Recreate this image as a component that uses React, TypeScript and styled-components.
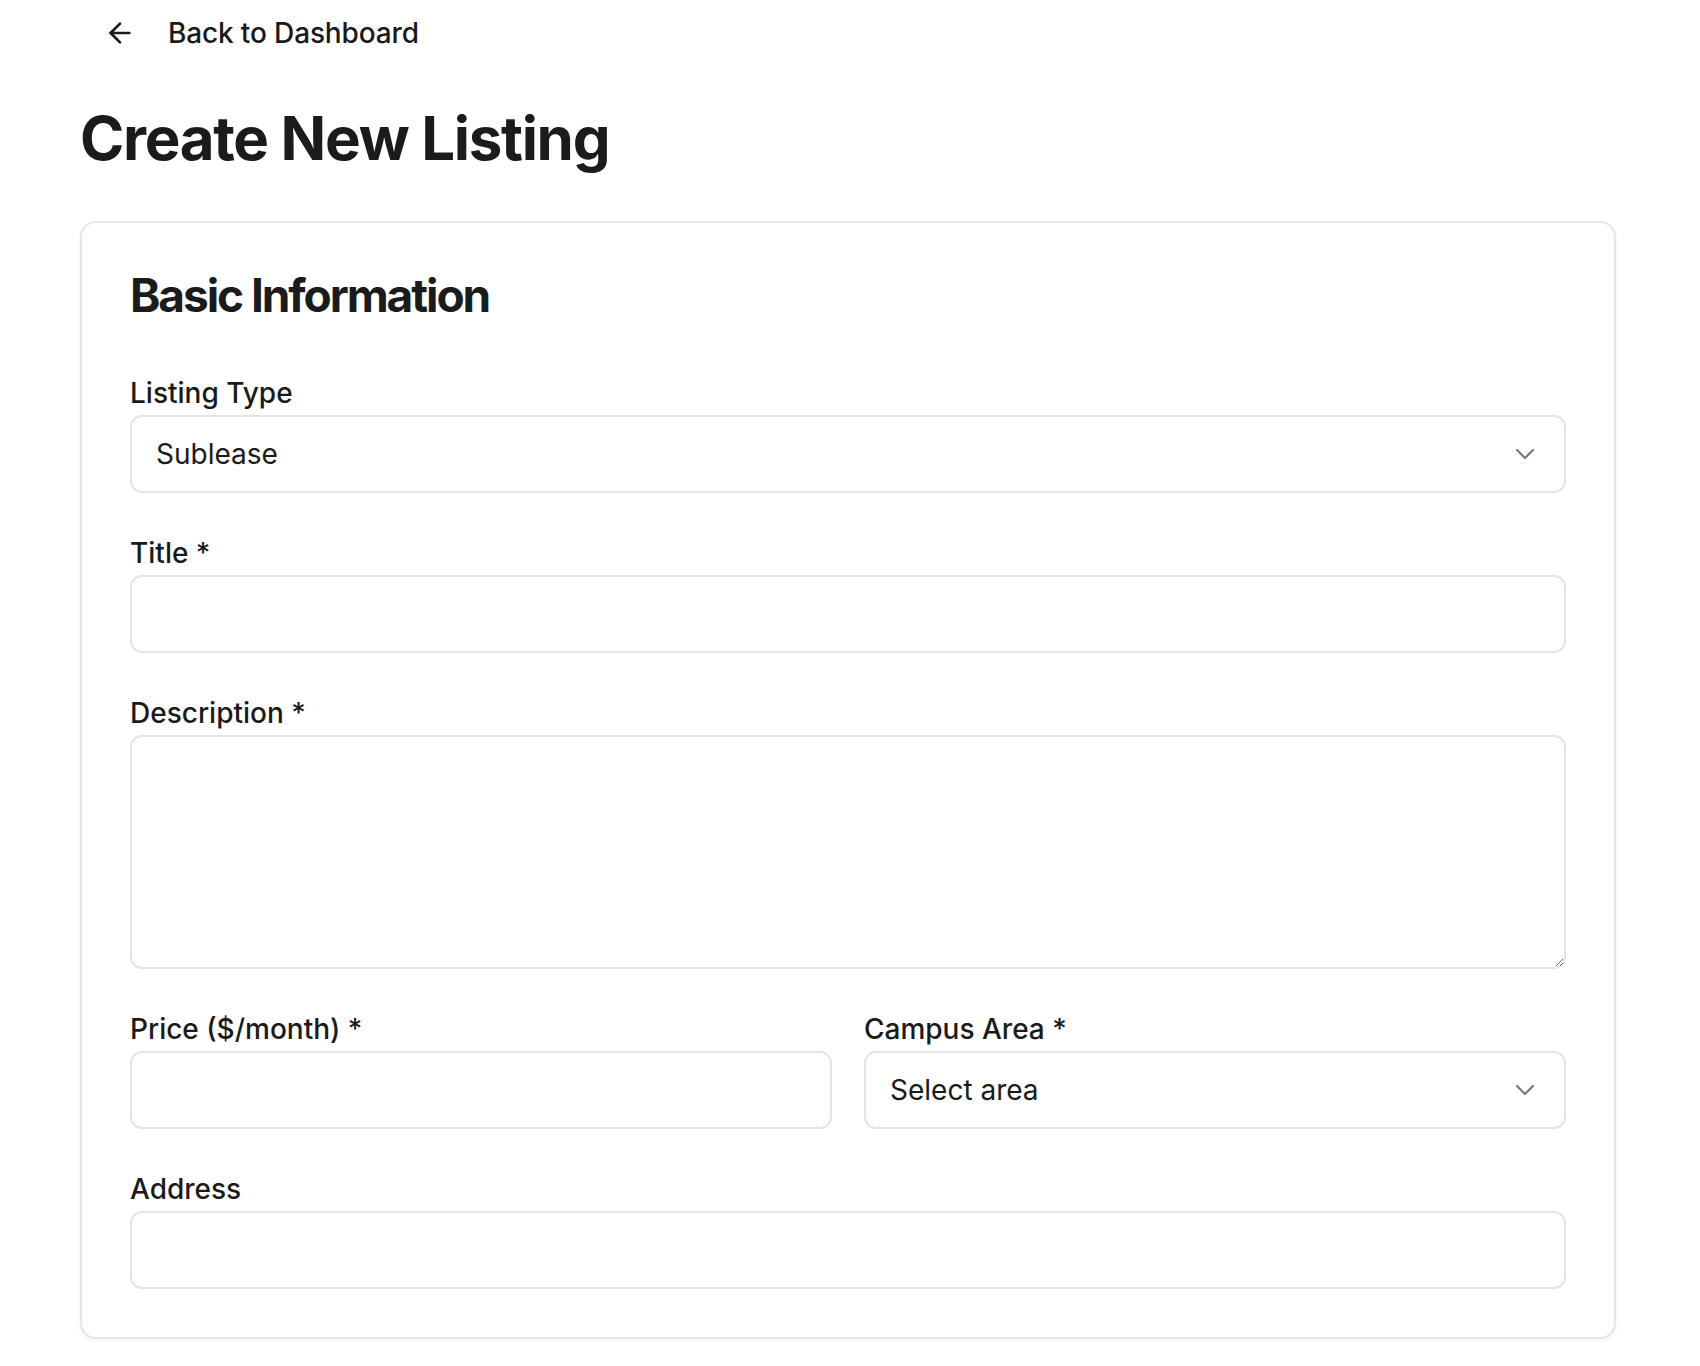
import React from "react";
import styled, { createGlobalStyle } from "styled-components";
import { ArrowLeft, ChevronDown } from "lucide-react";

const GlobalStyle = createGlobalStyle`
  html, body {
    margin: 0;
    padding: 0;
    background: #ffffff;
  }
  body {
    font-family: Inter, "Noto Sans", "Liberation Sans", sans-serif;
    color: #1a1a1a;
  }
  * {
    box-sizing: border-box;
  }
`;

const Page = styled.div`
  width: 1536px;
  margin-left: 80px;
  padding-top: 13px;
  padding-bottom: 40px;
`;

const BackLink = styled.a`
  display: inline-flex;
  align-items: center;
  gap: 32px;
  margin-left: 24px;
  font-size: 28px;
  line-height: 40px;
  font-weight: 500;
  letter-spacing: -0.005em;
  color: #1a1a1a;
  text-decoration: none;
  cursor: pointer;
`;

const PageTitle = styled.h1`
  margin: 50px 0 0;
  font-size: 60px;
  line-height: 70px;
  font-weight: 700;
  letter-spacing: -0.022em;
  color: #1b1b1b;
`;

const Card = styled.section`
  margin-top: 48px;
  padding: 48px;
  border: 2px solid #e6e6e6;
  border-radius: 16px;
  background: #ffffff;
  box-shadow: 0 2px 4px rgba(0, 0, 0, 0.05);
`;

const SectionTitle = styled.h2`
  margin: 0 0 54px;
  font-size: 46px;
  line-height: 48px;
  font-weight: 700;
  letter-spacing: -0.045em;
  color: #1b1b1b;
`;

const Fields = styled.div`
  display: flex;
  flex-direction: column;
  gap: 40px;
`;

const Row = styled.div`
  display: grid;
  grid-template-columns: 1fr 1fr;
  column-gap: 32px;
`;

const Field = styled.div`
  display: flex;
  flex-direction: column;
`;

const Label = styled.label`
  display: block;
  margin-bottom: 2px;
  font-size: 28px;
  line-height: 40px;
  font-weight: 500;
  color: #1a1a1a;
`;

const controlBase = `
  width: 100%;
  border: 2px solid #e4e4e4;
  border-radius: 12px;
  background: #ffffff;
  font-family: Inter, "Noto Sans", "Liberation Sans", sans-serif;
  font-size: 28px;
  color: #1a1a1a;
  padding: 0 24px;
  outline: none;
`;

const TextInput = styled.input`
  ${controlBase}
  height: 78px;
`;

const TextArea = styled.textarea`
  ${controlBase}
  height: 234px;
  padding-top: 16px;
  resize: vertical;
  display: block;
`;

const SelectWrap = styled.div`
  position: relative;
`;

const Select = styled.select`
  ${controlBase}
  height: 78px;
  appearance: none;
  -webkit-appearance: none;
`;

const Chevron = styled.span`
  position: absolute;
  right: 25px;
  top: 50%;
  transform: translateY(-50%);
  display: flex;
  color: #777777;
  pointer-events: none;
`;

type SelectProps = {
  id: string;
  value: string;
  options: string[];
};

function SelectField({ id, value, options }: SelectProps) {
  return (
    <SelectWrap>
      <Select id={id} defaultValue={value}>
        {options.map((o) => (
          <option key={o} value={o}>
            {o}
          </option>
        ))}
      </Select>
      <Chevron>
        <ChevronDown size={32} strokeWidth={1.6} />
      </Chevron>
    </SelectWrap>
  );
}

export default function App() {
  return (
    <>
      <GlobalStyle />
      <Page>
        <BackLink>
          <ArrowLeft size={32} strokeWidth={2} />
          <span>Back to Dashboard</span>
        </BackLink>
        <PageTitle>Create New Listing</PageTitle>
        <Card>
          <SectionTitle>Basic Information</SectionTitle>
          <Fields>
            <Field>
              <Label htmlFor="type">Listing Type</Label>
              <SelectField
                id="type"
                value="Sublease"
                options={["Sublease", "Roommate", "Rental"]}
              />
            </Field>
            <Field>
              <Label htmlFor="title">Title *</Label>
              <TextInput id="title" type="text" />
            </Field>
            <Field>
              <Label htmlFor="description">Description *</Label>
              <TextArea id="description" />
            </Field>
            <Row>
              <Field>
                <Label htmlFor="price">Price ($/month) *</Label>
                <TextInput id="price" type="number" />
              </Field>
              <Field>
                <Label htmlFor="area">Campus Area *</Label>
                <SelectField
                  id="area"
                  value="Select area"
                  options={["Select area", "North Campus", "South Campus"]}
                />
              </Field>
            </Row>
            <Field>
              <Label htmlFor="address">Address</Label>
              <TextInput id="address" type="text" />
            </Field>
          </Fields>
        </Card>
      </Page>
    </>
  );
}
